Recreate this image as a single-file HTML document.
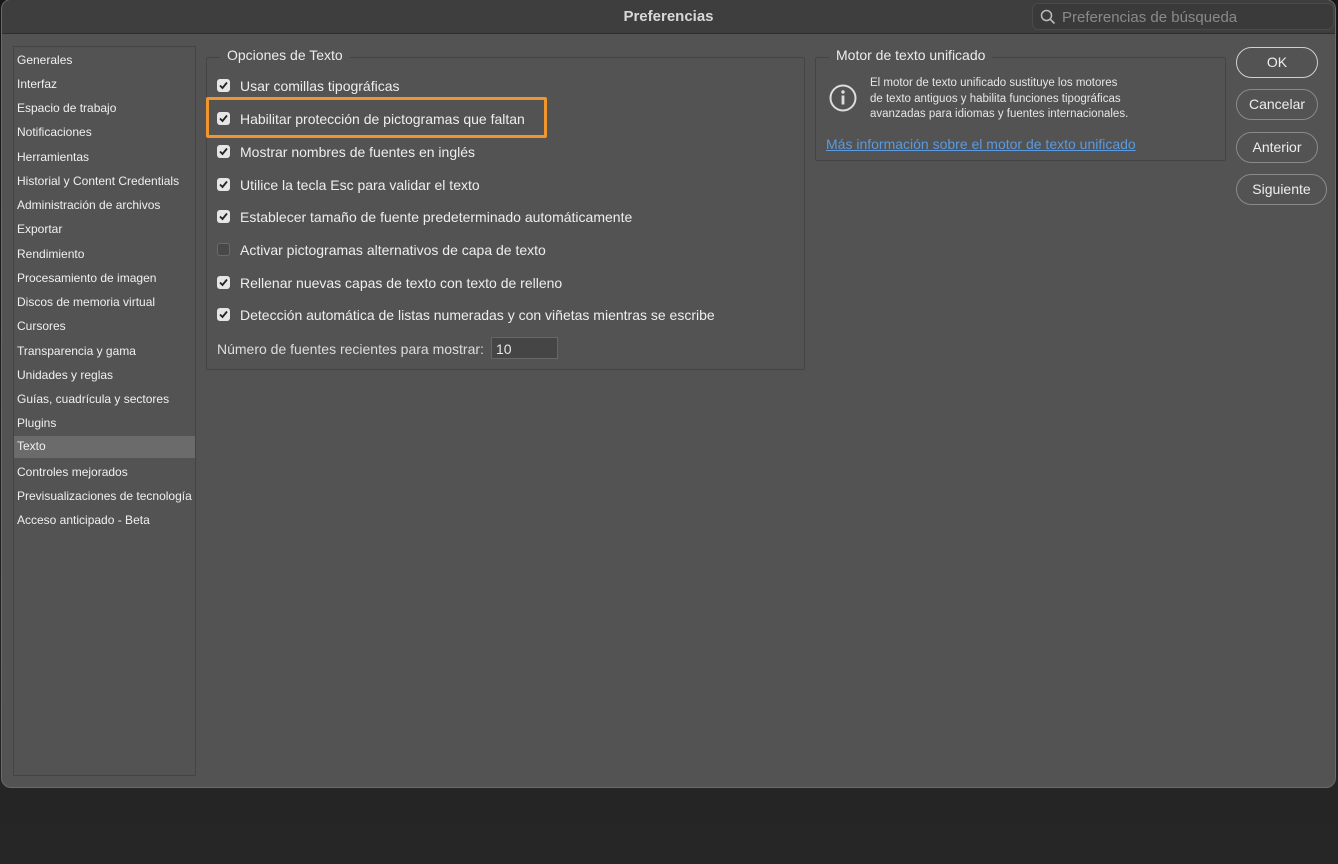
<!DOCTYPE html>
<html><head><meta charset="utf-8"><style>
*{box-sizing:border-box;margin:0;padding:0}
body{width:1338px;height:864px;overflow:hidden;background:linear-gradient(#181818,#262626);font-family:"Liberation Sans",sans-serif;color:#e8e8e8;position:relative}
.dlg{position:absolute;left:1px;top:-1px;width:1335px;height:789px;background:#535353;border-radius:10px;border:1px solid #6a6a6a;overflow:hidden}
.title{position:absolute;left:0;top:0;width:100%;height:34px;background:#3e3e3e;border-bottom:1px solid #2e2e2e}
.title .t{position:absolute;left:0;width:100%;top:8px;text-align:center;font-weight:bold;font-size:15px;color:#d8d8d8}
.search{position:absolute;left:1030px;top:3px;width:302px;height:27px;border:1px solid #4a4a4a;border-radius:6px;background:#3a3a3a;color:#8a8a8a;font-size:15px;padding:5px 0 0 29px}
.a{position:absolute}
.side{left:11px;top:46px;width:183px;height:730px;border:1px solid #444;background:#535353}
.side div{position:absolute;left:0;width:181px;height:22px;font-size:12px;padding:3px 0 0 3px;color:#f0f0f0}
.side .sel{background:#6b6b6b;padding-top:5px}
.box{border:1px solid #444;border-radius:2px}
.leg{position:absolute;background:#535353;padding:0 7px;font-size:14px;color:#ececec}
.row{position:absolute;left:215px;font-size:14px;color:#eee}
.cb{position:absolute;left:0;top:0;width:13px;height:13px;border-radius:3px;background:#e6e6e6}
.cb.off{background:#484848;border:1px solid #6a6a6a}
.cb svg{position:absolute;left:1px;top:1px}
.row span{position:absolute;left:23px;top:-1px;white-space:nowrap}
.btn{position:absolute;left:1234px;width:82px;height:31px;border:1.5px solid #8a8a8a;border-radius:16px;text-align:center;font-size:14px;padding-top:6px;color:#eee}
</style></head><body>
<div class="dlg">
<div class="title"><div class="t">Preferencias</div>
<div class="search"><svg style="position:absolute;left:7px;top:5px" width="16" height="16" viewBox="0 0 16 16"><circle cx="6.5" cy="6.5" r="5" fill="none" stroke="#bbb" stroke-width="1.5"/><path d="M10.2 10.2L14.5 14.5" stroke="#bbb" stroke-width="1.6"/></svg>Preferencias de búsqueda</div></div>
<div class="a side">
<div style="top:3px">Generales</div><div style="top:27px">Interfaz</div><div style="top:51px">Espacio de trabajo</div><div style="top:75px">Notificaciones</div><div style="top:100px">Herramientas</div><div style="top:124px">Historial y Content Credentials</div><div style="top:148px">Administración de archivos</div><div style="top:172px">Exportar</div><div style="top:197px">Rendimiento</div><div style="top:221px">Procesamiento de imagen</div><div style="top:245px">Discos de memoria virtual</div><div style="top:269px">Cursores</div><div style="top:294px">Transparencia y gama</div><div style="top:318px">Unidades y reglas</div><div style="top:342px">Guías, cuadrícula y sectores</div><div style="top:366px">Plugins</div><div class="sel" style="top:389px;padding-top:3px">Texto</div><div style="top:415px">Controles mejorados</div><div style="top:439px">Previsualizaciones de tecnología</div><div style="top:463px">Acceso anticipado - Beta</div>
</div>
<div class="a box" style="left:204px;top:57px;width:599px;height:313px"></div>
<div class="leg" style="left:218px;top:47px">Opciones de Texto</div>
<div class="a" style="left:204px;top:97px;width:341px;height:41px;border:3px solid #f0962d;border-radius:2px"></div>
<div class="row" style="top:79px"><div class="cb"><svg width="11" height="11" viewBox="0 0 11 11"><path d="M2 5.5L4.5 8L9 2.5" fill="none" stroke="#222" stroke-width="1.8"/></svg></div><span>Usar comillas tipográficas</span></div>
<div class="row" style="top:112px"><div class="cb"><svg width="11" height="11" viewBox="0 0 11 11"><path d="M2 5.5L4.5 8L9 2.5" fill="none" stroke="#222" stroke-width="1.8"/></svg></div><span>Habilitar protección de pictogramas que faltan</span></div>
<div class="row" style="top:145px"><div class="cb"><svg width="11" height="11" viewBox="0 0 11 11"><path d="M2 5.5L4.5 8L9 2.5" fill="none" stroke="#222" stroke-width="1.8"/></svg></div><span>Mostrar nombres de fuentes en inglés</span></div>
<div class="row" style="top:178px"><div class="cb"><svg width="11" height="11" viewBox="0 0 11 11"><path d="M2 5.5L4.5 8L9 2.5" fill="none" stroke="#222" stroke-width="1.8"/></svg></div><span>Utilice la tecla Esc para validar el texto</span></div>
<div class="row" style="top:210px"><div class="cb"><svg width="11" height="11" viewBox="0 0 11 11"><path d="M2 5.5L4.5 8L9 2.5" fill="none" stroke="#222" stroke-width="1.8"/></svg></div><span>Establecer tamaño de fuente predeterminado automáticamente</span></div>
<div class="row" style="top:243px"><div class="cb off"></div><span>Activar pictogramas alternativos de capa de texto</span></div>
<div class="row" style="top:276px"><div class="cb"><svg width="11" height="11" viewBox="0 0 11 11"><path d="M2 5.5L4.5 8L9 2.5" fill="none" stroke="#222" stroke-width="1.8"/></svg></div><span>Rellenar nuevas capas de texto con texto de relleno</span></div>
<div class="row" style="top:308px"><div class="cb"><svg width="11" height="11" viewBox="0 0 11 11"><path d="M2 5.5L4.5 8L9 2.5" fill="none" stroke="#222" stroke-width="1.8"/></svg></div><span>Detección automática de listas numeradas y con viñetas mientras se escribe</span></div>
<div class="a" style="left:215px;top:341px;font-size:14px;color:#ddd">Número de fuentes recientes para mostrar:</div>
<div class="a" style="left:489px;top:337px;width:67px;height:22px;background:#454545;border:1px solid #666;font-size:14px;padding:3px 0 0 4px">10</div>
<div class="a box" style="left:813px;top:57px;width:411px;height:104px"></div>
<div class="leg" style="left:827px;top:47px">Motor de texto unificado</div>
<svg class="a" style="left:826px;top:83px" width="30" height="30" viewBox="0 0 30 30"><circle cx="15" cy="15" r="12.5" fill="none" stroke="#ddd" stroke-width="2"/><circle cx="15" cy="9" r="1.7" fill="#ddd"/><rect x="13.6" y="12.5" width="2.8" height="9" fill="#ddd"/></svg>
<div class="a" style="left:868px;top:76px;font-size:11.5px;line-height:15.5px;color:#e6e6e6">El motor de texto unificado sustituye los motores<br>de texto antiguos y habilita funciones tipográficas<br>avanzadas para idiomas y fuentes internacionales.</div>
<div class="a" style="left:824px;top:136px;font-size:14px;color:#5a9ae0;text-decoration:underline">Más información sobre el motor de texto unificado</div>
<div class="btn" style="top:47px;border-color:#d0d0d0">OK</div>
<div class="btn" style="top:89px">Cancelar</div>
<div class="btn" style="top:132px">Anterior</div>
<div class="btn" style="top:174px;width:91px">Siguiente</div>
</div>
</body></html>
